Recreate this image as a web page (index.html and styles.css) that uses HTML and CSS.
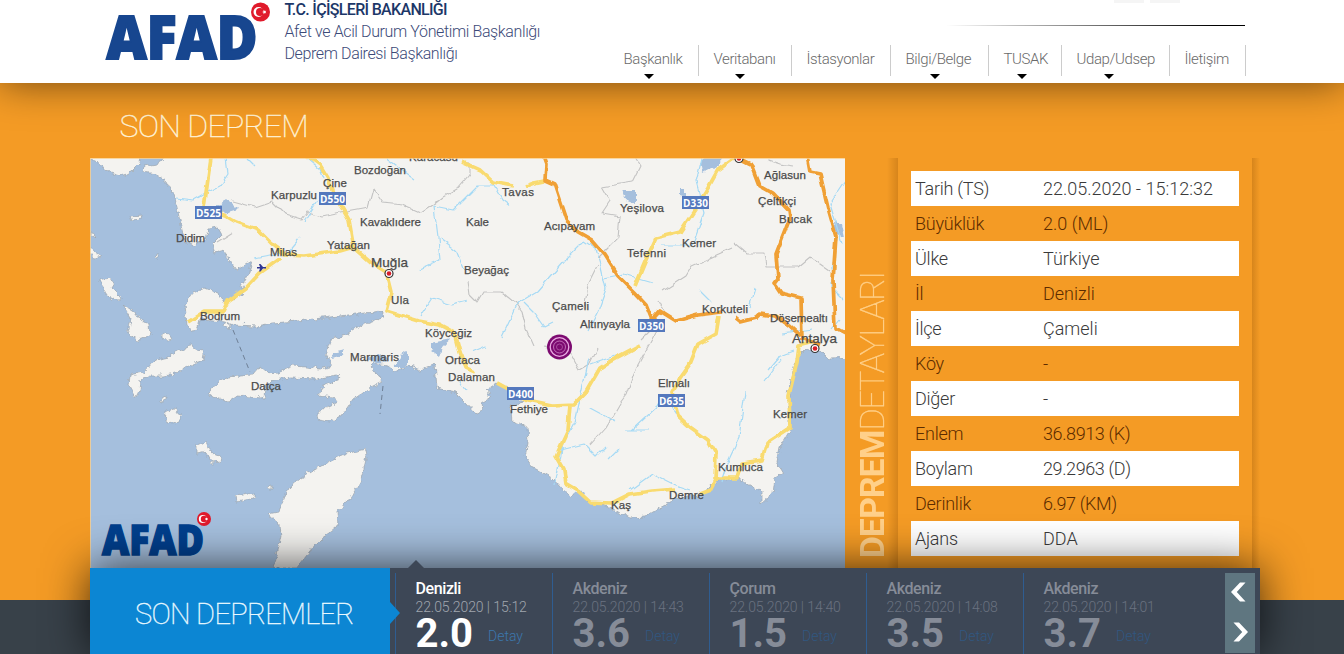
FILE: index.html
```html
<!DOCTYPE html>
<html lang="tr">
<head>
<meta charset="utf-8">
<title>AFAD Deprem</title>
<link rel="stylesheet" href="styles.css">
</head>
<body>
<div class="page">
  <header class="header">
    <div class="brand">
      <svg class="logo" viewBox="0 0 170 66" width="170" height="66">
        <text class="logo-text" x="1.500" y="59" font-size="59.500" textLength="151" lengthAdjust="spacingAndGlyphs">AFAD</text>
        <circle cx="155.500" cy="12" r="9.500" fill="#e01a2b"/>
        <circle cx="153.500" cy="12" r="5" fill="#fff"/>
        <circle cx="155" cy="12" r="4" fill="#e01a2b"/>
        <path d="M157 12l1.500-.600.200-1.600 1 1.300 1.600-.400-.900 1.300.900 1.300-1.600-.400-1 1.300-.200-1.600z" fill="#fff"/>
      </svg>
      <div class="dept">
        <div class="dept-main">T.C. İÇİŞLERİ BAKANLIĞI</div>
        <div class="dept-mid">Afet ve Acil Durum Yönetimi Başkanlığı</div>
        <div class="dept-sub">Deprem Dairesi Başkanlığı</div>
      </div>
    </div>
    <div class="head-right">
      <div class="tabs"><i></i><i></i></div>
      <div class="rule"></div>
      <nav class="nav">
        <a class="has-menu"><span>Başkanlık</span></a>
        <a class="has-menu"><span>Veritabanı</span></a>
        <a><span>İstasyonlar</span></a>
        <a class="has-menu"><span>Bilgi/Belge</span></a>
        <a class="has-menu"><span>TUSAK</span></a>
        <a class="has-menu"><span>Udap/Udsep</span></a>
        <a><span>İletişim</span></a>
      </nav>
    </div>
  </header>

  <main class="main">
    <h1 class="title">SON DEPREM</h1>
    <div class="content">
      <svg class="map" viewBox="90 158 755 410" width="755" height="410">
        <defs>
          <filter id="rough" x="-5%" y="-5%" width="110%" height="110%">
            <feTurbulence type="fractalNoise" baseFrequency="0.16" numOctaves="3" seed="4" result="n"/>
            <feDisplacementMap in="SourceGraphic" in2="n" scale="7" xChannelSelector="R" yChannelSelector="G"/>
          </filter>
          <filter id="wobble" x="-5%" y="-5%" width="110%" height="110%">
            <feTurbulence type="fractalNoise" baseFrequency="0.09" numOctaves="2" seed="9" result="n"/>
            <feDisplacementMap in="SourceGraphic" in2="n" scale="6" xChannelSelector="R" yChannelSelector="G"/>
          </filter>
          <filter id="bend" x="-5%" y="-5%" width="110%" height="110%">
            <feTurbulence type="fractalNoise" baseFrequency="0.1" numOctaves="1" seed="3" result="n"/>
            <feDisplacementMap in="SourceGraphic" in2="n" scale="5" xChannelSelector="R" yChannelSelector="G"/>
          </filter>
        </defs>
        <rect x="90" y="158" width="755" height="410" fill="#a5bfdd"/>
        <g class="land" filter="url(#rough)">
          <path d="M168 150L158 165 144 167 143 172 156 174 167 182 175 197 178 211 182 230 185 241 192 245 205 239 208 230 218 228 222 235 212 245 215 253 223 251 230 260 237 270 252 261 248 275 242 285 245 291 232 300 225 305 218 293 205 288 193 293 185 305 187 325 192 331 198 330 200 319 223 321 233 325 257 326 272 323 297 321 347 315 383 311 382 318 360 326 343 336 332 339 326 355 333 366 320 369 307 367 293 366 277 372 267 373 260 367 253 375 227 377 220 381 208 392 217 398 228 402 237 396 263 398 266 388 274 380 290 378 317 379 337 375 340 379 323 387 318 395 333 397 337 403 317 413 318 420 330 422 343 415 353 400 370 388 382 382 377 373 370 367 373 363 387 365 395 372 408 365 420 370 435 364 437 388 455 392 465 402 475 413 483 410 482 403 492 397 485 391 497 383 507 388 513 397 525 402 510 405 512 421 527 426 528 443 525 458 532 467 553 478 570 497 577 492 587 501 606 505 620 513 630 518 645 517 653 512 670 503 673 498 705 494 717 480 737 478 753 487 762 493 762 503 773 493 775 478 783 473 777 463 780 447 790 430 790 410 788 393 793 370 797 358 807 348 817 351 830 358 860 357 860 140Z"/>
          <path d="M90 158L98 162 106 172 120 176 130 173 139 164 143 150 90 150Z"/>
          <path d="M130 216L142 215 141 220 132 221Z M157 254l2 0v5h-3z M90 230l6 8-6-4z M90 248l12 8-8 2-4-3z M100 280l8-2 7 5-3 5 7 7 1 5-10-1-10-14z M123 305l12 8 4 6 10 5 1 10-5 3-8 3-9-7 3-14z M162 334l5-2 4 6-4 2-5-2z M191 345l14 9-1 6-18 6-11 8-11 2-14 0-10 4-1 11-3 6-7-12 1-10 14-3 11-12 14-3z M161 400l5-3-1 3-4 2z M166 411l8-2 6 4 0 8-8 3-7-3z M197 445l9-4 6 12 10 4-1 5-10 1-6-11-8 2z M236 496l18-3v5l-17 4z M267 487l5-2 0 5-4 0z M224 321l7 4-1 5-8-4z"/>
          <path d="M366 449L367 456 360 483 348 501 337 511 338 526 330 533 322 538 314 546 297 568 274 568 281 536 280 525 268 514 278 512 289 488 301 477 324 464 347 453Z"/>
        </g>
        <g class="water" filter="url(#rough)">
          <path d="M204 208l12-2 10-7 8 6 4 4-10 3-12 2z M622 190l14 0 0 14-10-4z M679 189l6 0 0 8-6-2z M703 155l24 0-8 9-16 9-1-6z M431 343l20-4-8 7-3 10-9-6z M394 367l8-12 6-4v13l-4 3z M366 358l15-4 9 7-14 2z M834 222l8 2 3 14-9-4z M333 352l12-3-2 6-11 3z M573 493l5-4 7 5-4 8z"/>
        </g>
        <g class="border" filter="url(#wobble)">
          <path d="M232 201l22 6 18-6 14 14 16 5 6-8 14 4 24-5 22-4 5-18 10 14 20 2 18 8 12-8 10-8 14-8 12-14 0-12M216 243l16-10M468 280l2 16 6 6 6-10 20 0 14 12 6 8 4 16 8 18M545 346l24 6 10 18 10-6 8-16M598 265l-10 20-4 24M635 158l5 8-8 16-30 5 8 14-8 12 18 3-2 22-20 20M658 301l6 12M663 291l23-15 6-10 40-18M734 243l12 10 18 0 2 14 32 0 12-10 20 14M640 340l10-10M590 445l16-18 14-24 6-8 8-22 24-44M768 160l12 4 14 2"/>
        </g>
        <g class="river" filter="url(#wobble)">
          <path d="M226 158l2 16-8 12-12 6-14 8-18-2M247 158l8 8M308 158l12 10 4 10M318 200l-14 22 M300 238l-12 14-34 6M385 158l30 22M434 206l20 4 24-24 16 0 8 14 8 6M434 206l4 32 2 22-20 9M440 238l16 12 8 20M468 300l-16 4-20-6-12 18M502 337l16-34 20-12 26-30 20-20 12 8 4 14 6 26-8 22-10 20M524 303l10 10 10 14 8-4M604 278l20-4 28 8M702 158l-6 24 8 30-12 34-30 0M699 290l12 12M755 288l-6 20M846 180l-16 24 12 40M833 260v30l10 10M840 320l-8 10M782 333l30-4M790 410l-10 8M768 370l10-12 16-6M780 360l-16 22M745 392l-6 46-14 30-4 14M632 430l26-24 14 0 8 12M630 490l22-16 20 10 18 6M555 484l8-40 12-22 14-64M560 450l24-6 12 12 10-10M650 430l-24 0M590 365l40-14M472 352l14-6M460 380l6 10M590 408l26 14M618 450l-10 10"/>
        </g>
        <g class="road-y" filter="url(#bend)">
          <path d="M212 150L204 208 224 215 236 222 258 230 270 242 286 255 304 256 340 251 354 247M281 258L260 273 246 288 228 301 223 311 205 311 188 322M305 154L320 165 328 178 334 196 342 208 349 220 354 248 370 262 386 272 391 292 386 311 419 321 440 325 455 333 460 352 466 368 475 372M497 383L514 392 528 400 552 405 574 404 586 392 600 368 612 360 640 345M462 162L480 170 493 182 514 186M526 186L534 183 544 181M570 405L568 430 556 456 564 470 566 484 578 491 590 502 612 503 630 494 652 491 676 489M700 494L711 490 717 478 737 478 742 463 762 460 767 443 790 428 789 395 797 362 799 346 815 342M735 158L718 170 708 188 696 208 680 232 656 238 645 262 635 286M719 316L716 334 698 344 690 364 680 378 672 392 678 416 690 427 708 440 716 454 715 480"/>
        </g>
        <g class="road-o" filter="url(#bend)">
          <path d="M541 150L546 164 545 180 554 184 566 220 578 232 592 240 604 254 618 276 634 292 646 305 652 320 660 311 676 321 698 315 722 312M735 318L740 322 756 318 760 314 776 316 790 326 800 335M738 158L752 165 760 186 774 194 789 210 790 218 776 254 778 280 775 284 781 293 801 298 802 340M806 150L810 172 820 174 828 208 836 236 833 280 835 328 850 336M801 338L820 345"/>
        </g>
        <path class="ferry" d="M233 330L250 372M383 386l-3 28"/>
        <g class="places">
          <text x="409" y="161" textLength="49">Karacasu</text>
          <text x="354" y="174" textLength="52">Bozdoğan</text><text x="323" y="187" textLength="24">Çine</text>
          <text x="271" y="199" textLength="46">Karpuzlu</text><text x="176" y="242" textLength="29">Didim</text>
          <text x="270" y="256" textLength="27">Milas</text><text x="327" y="249" textLength="43">Yatağan</text>
          <text x="360" y="226" textLength="61">Kavaklıdere</text><text x="466" y="226" textLength="23">Kale</text>
          <text x="502" y="196" textLength="32">Tavas</text><text x="544" y="230" textLength="51">Acıpayam</text>
          <text class="city" x="371" y="267" textLength="37">Muğla</text><text x="464" y="274" textLength="45">Beyağaç</text>
          <text x="391" y="304" textLength="18">Ula</text><text x="552" y="310" textLength="37">Çameli</text>
          <text x="200" y="320" textLength="40">Bodrum</text><text x="425" y="337" textLength="47">Köyceğiz</text>
          <text x="580" y="328" textLength="50">Altınyayla</text><text x="350" y="361" textLength="49">Marmaris</text>
          <text x="445" y="364" textLength="35">Ortaca</text><text x="448" y="381" textLength="47">Dalaman</text>
          <text x="251" y="390" textLength="30">Datça</text><text x="510" y="413" textLength="38">Fethiye</text>
          <text x="620" y="212" textLength="44">Yeşilova</text><text x="682" y="247" textLength="34">Kemer</text>
          <text x="627" y="257" textLength="39">Tefenni</text><text x="764" y="179" textLength="42">Ağlasun</text>
          <text x="758" y="205" textLength="38">Çeltikçi</text><text x="779" y="223" textLength="33">Bucak</text>
          <text x="702" y="313" textLength="46">Korkuteli</text><text x="770" y="322" textLength="58">Döşemealtı</text>
          <text class="city" x="792" y="343" textLength="45">Antalya</text><text x="658" y="387" textLength="32">Elmalı</text>
          <text x="773" y="418" textLength="34">Kemer</text><text x="718" y="471" textLength="45">Kumluca</text>
          <text x="669" y="499" textLength="35">Demre</text><text x="611" y="509" textLength="20">Kaş</text>
        </g>
        <g class="shields">
          <g fill="#5478bd"><rect x="195" y="206" width="27" height="13"/><rect x="319" y="192" width="27" height="13"/><rect x="682" y="196" width="27" height="13"/><rect x="638" y="319" width="27" height="13"/><rect x="507" y="387" width="27" height="13"/><rect x="658" y="394" width="27" height="13"/></g>
          <text x="196" y="216.500" textLength="25">D525</text><text x="320" y="202.500" textLength="25">D550</text><text x="683" y="206.500" textLength="25">D330</text><text x="639" y="329.500" textLength="25">D350</text><text x="508" y="397.500" textLength="25">D400</text><text x="659" y="404.500" textLength="25">D635</text>
        </g>
        <g fill="#fff" stroke="#333" stroke-width="1.200"><circle cx="389" cy="273.500" r="4"/><circle cx="815" cy="348.500" r="4"/><circle cx="739" cy="158.500" r="4"/></g>
        <g fill="#d81e28"><circle cx="389" cy="273.500" r="2.300"/><circle cx="815" cy="348.500" r="2.300"/><circle cx="739" cy="158.500" r="2.300"/></g>
        <path d="M257 267h3l-1-3h1.500l2.500 3h3v1.500h-3l-2.500 3h-1.500l1-3h-3z" fill="#2f3592"/>
        <circle cx="559.500" cy="347" r="12.500" fill="#7c0a70"/>
        <g fill="none" stroke="#e9a9e2"><circle cx="559.500" cy="347" r="9.300" stroke-width="1.300"/><circle cx="559.500" cy="347" r="6" stroke-width=".9" opacity=".7"/><circle cx="559.500" cy="347" r="3" stroke-width=".8" opacity=".5"/></g>
        <text class="map-logo" x="102" y="555" font-size="42.500" textLength="102" lengthAdjust="spacingAndGlyphs">AFAD</text>
        <circle cx="204" cy="519" r="7" fill="#e01a2b"/><circle cx="202.800" cy="519" r="4" fill="#fff"/><circle cx="204" cy="519" r="3.200" fill="#e01a2b"/><circle cx="206.500" cy="519" r="1.200" fill="#fff"/>
        <path d="M90.500 158v410M90 158.500h755" stroke="#fbd08c" fill="none" opacity=".8"/>
      </svg>
      <div class="side-title"><span><b>DEPREM</b><em>DETAYLARI</em></span></div>
      <div class="details">
        <dl>
          <div><dt>Tarih (TS)</dt><dd>22.05.2020 - 15:12:32</dd></div>
          <div><dt>Büyüklük</dt><dd>2.0 (ML)</dd></div>
          <div><dt>Ülke</dt><dd>Türkiye</dd></div>
          <div><dt>İl</dt><dd>Denizli</dd></div>
          <div><dt>İlçe</dt><dd>Çameli</dd></div>
          <div><dt>Köy</dt><dd>-</dd></div>
          <div><dt>Diğer</dt><dd>-</dd></div>
          <div><dt>Enlem</dt><dd class="snug">36.8913 (K)</dd></div>
          <div><dt>Boylam</dt><dd class="snug">29.2963 (D)</dd></div>
          <div><dt>Derinlik</dt><dd class="snug">6.97 (KM)</dd></div>
          <div><dt>Ajans</dt><dd>DDA</dd></div>
        </dl>
      </div>
      <div class="edge"></div>
    </div>
  </main>

  <section class="bottom">
    <div class="bar">
      <div class="bar-title"><span>SON DEPREMLER</span></div>
      <div class="items">
        <article class="item active"><h3>Denizli</h3><time>22.05.2020 | 15:12</time><p><strong>2.0</strong><a>Detay</a></p></article>
        <article class="item"><h3>Akdeniz</h3><time>22.05.2020 | 14:43</time><p><strong>3.6</strong><a>Detay</a></p></article>
        <article class="item"><h3>Çorum</h3><time>22.05.2020 | 14:40</time><p><strong>1.5</strong><a>Detay</a></p></article>
        <article class="item"><h3>Akdeniz</h3><time>22.05.2020 | 14:08</time><p><strong>3.5</strong><a>Detay</a></p></article>
        <article class="item"><h3>Akdeniz</h3><time>22.05.2020 | 14:01</time><p><strong>3.7</strong><a>Detay</a></p></article>
      </div>
      <div class="arrows">
        <svg viewBox="0 0 30 40" width="30" height="40"><path d="M15 9.500h5.500L11.800 19l8.700 9.500H15L6 19z" fill="#fff"/></svg>
        <svg viewBox="0 0 30 40" width="30" height="40"><path d="M14 9.500H8.500L17.200 19l-8.700 9.500H14L23 19z" fill="#fff"/></svg>
      </div>
    </div>
  </section>
</div>
</body>
</html>
```
FILE: styles.css
```css
* { box-sizing: border-box; margin: 0; padding: 0; }
body { font-family: Roboto, "Open Sans", sans-serif; font-weight: 300; overflow: hidden; }
.page { width: 1344px; height: 654px; overflow: hidden; display: flex; flex-direction: column; background: #f49b25; }

.header { position: relative; z-index: 3; height: 83px; flex: none; background: #fff; box-shadow: 0 0 40px rgba(0, 0, 0, .55); display: flex; justify-content: space-between; padding: 0 99px 0 105px; }
.brand { display: flex; gap: 9.500px; }
.logo { overflow: visible; }
.logo-text, .map-logo { font-family: "Open Sans", sans-serif; font-weight: 800; fill: #17468f; stroke: #17468f; stroke-width: 2; }
.map-logo { fill: #003f8d; stroke: #003f8d; stroke-width: 1.500; }
.dept { color: #3c4a78; font-size: 16px; line-height: 22px; white-space: nowrap; margin-top: -1px; letter-spacing: -.38px; }
.dept-main { font-weight: 500; color: #1c3768; letter-spacing: -.68px; }
.head-right { display: flex; flex-direction: column; align-items: flex-end; }
.tabs { height: 25px; display: flex; gap: 6px; padding-right: 65px; }
.tabs i { width: 30px; height: 3px; background: #f5f5f5; }
.rule { width: 299px; height: 1px; background: linear-gradient(90deg, #fff, #000 90%); }
.nav { display: grid; grid-template-columns: 90px 93px 99px 98px 73px 108px 76px; height: 31px; margin-top: 19px; margin-right: -1px; font-size: 15px; color: #6a6a6a; letter-spacing: -.4px; }
.nav a { position: relative; border-right: 1px solid #ccc; padding-left: 14.500px; line-height: 29px; white-space: nowrap; }
.has-menu::after { content: ""; position: absolute; left: 50%; margin-left: -10px; top: 29px; border: 5px solid transparent; border-top-color: #000; border-bottom: 0; }
.nav a:nth-child(6)::after { margin-left: -12px; }
.nav a:nth-child(5)::after { margin-left: -8px; }

.main { height: 485px; flex: none; padding-left: 90px; }
.title { height: 75px; padding: 26px 0 0 29.500px; font-size: 32px; line-height: 34px; font-weight: 100; color: #fff3d8; letter-spacing: -.7px; -webkit-text-stroke: .4px #fff3d8; }
.content { display: flex; height: 410px; }
.map { flex: none; display: block; }
.land { fill: #f4f3f0; stroke: #9aa3ad; stroke-width: .7; }
.water { fill: #a5bfdd; }
.border, .river, .road-y, .road-o, .ferry { fill: none; stroke-linejoin: round; }
.border { stroke: #c3c3c3; stroke-width: 1.100; }
.river { stroke: #a6daf5; stroke-width: 1.200; }
.road-y { stroke: #f9db70; stroke-width: 3.700; }
.road-o { stroke: #f0a035; stroke-width: 3.700; }
.ferry { stroke: #6f8096; stroke-width: 1; stroke-dasharray: 5 4; }
.places text { font: 400 11.500px "Liberation Sans", sans-serif; fill: #4a4a4a; stroke: #4a4a4a; stroke-width: .25px; }
.places .city { font-size: 13.500px; }
.shields text { font: 700 10px "Open Sans", sans-serif; fill: #fff; }

.side-title { width: 53px; flex: none; position: relative; background: linear-gradient(90deg, transparent 42px, rgba(130, 70, 0, .26)); }
.side-title span { position: absolute; left: 9px; bottom: 10px; writing-mode: vertical-rl; transform: rotate(180deg); font-size: 34px; line-height: 36px; color: #ffd08a; white-space: nowrap; }
.side-title b { font-weight: 700; letter-spacing: -1px; }
.side-title em { font-style: normal; font-weight: 100; -webkit-text-stroke: .3px #ffd08a; letter-spacing: -1.200px; }
.details { width: 354px; flex: none; padding: 13px 13px 0; }
.details dl div { display: flex; height: 35px; line-height: 36px; padding-left: 4px; font-size: 18px; color: #5c2c00; white-space: nowrap; }
.details dl div:nth-child(odd) { background: #fff; color: #3a3a3a; }
.details dt { width: 128px; letter-spacing: -.25px; }
.details .snug { letter-spacing: -.4px; }
.edge { width: 8px; background: linear-gradient(90deg, rgba(130, 70, 0, .26), transparent); }

.bottom { position: relative; height: 86px; flex: none; padding-left: 90px; }
.bottom::before { content: ""; position: absolute; inset: 32px 0 0; background: #384149; }
.bar { position: relative; width: 1170px; height: 86px; background: #3d4756; box-shadow: 0 0 45px rgba(0, 0, 0, .75); display: flex; }
.bar-title { position: relative; width: 300px; flex: none; background: #0c86d3; color: #e8f8ff; font-size: 29px; font-weight: 100; letter-spacing: -.7px; -webkit-text-stroke: .4px #e8f8ff; line-height: 92px; padding-left: 45px; white-space: nowrap; }
.bar-title::after { content: ""; position: absolute; left: 300px; top: 34px; border: 11px solid transparent; border-left: 10px solid #0c86d3; border-right: 0; z-index: 2; }
.items { display: flex; padding: 5px 0 0 5px; width: 835px; }
.item { position: relative; width: 157px; flex: none; height: 81px; border-left: 1px solid #2f5d91; padding: 6px 0 0 19.500px; color: #868c98; white-space: nowrap; }
.item h3 { font-size: 16px; line-height: 20px; font-weight: 500; letter-spacing: -.4px; }
.item time { display: block; font-size: 14px; line-height: 17px; color: #6a7280; letter-spacing: -.08px; }
.item p { display: flex; align-items: flex-start; gap: 15.500px; }
.item strong { font-size: 40px; line-height: 35px; font-weight: 700; width: 57px; }
.item a { font-size: 14px; line-height: 20px; color: #315781; padding-top: 10px; }
.active { color: #fff; }
.active time { color: #a0a6ae; }
.active a { color: #3c77ad; }
.active::before { content: ""; position: absolute; left: 12px; top: -13px; border: 8px solid transparent; border-bottom-color: #3d4756; border-top: 0; }
.arrows { width: 30px; height: 80px; margin-top: 5px; background: #5f7680; display: flex; flex-direction: column; flex: none; }
```
